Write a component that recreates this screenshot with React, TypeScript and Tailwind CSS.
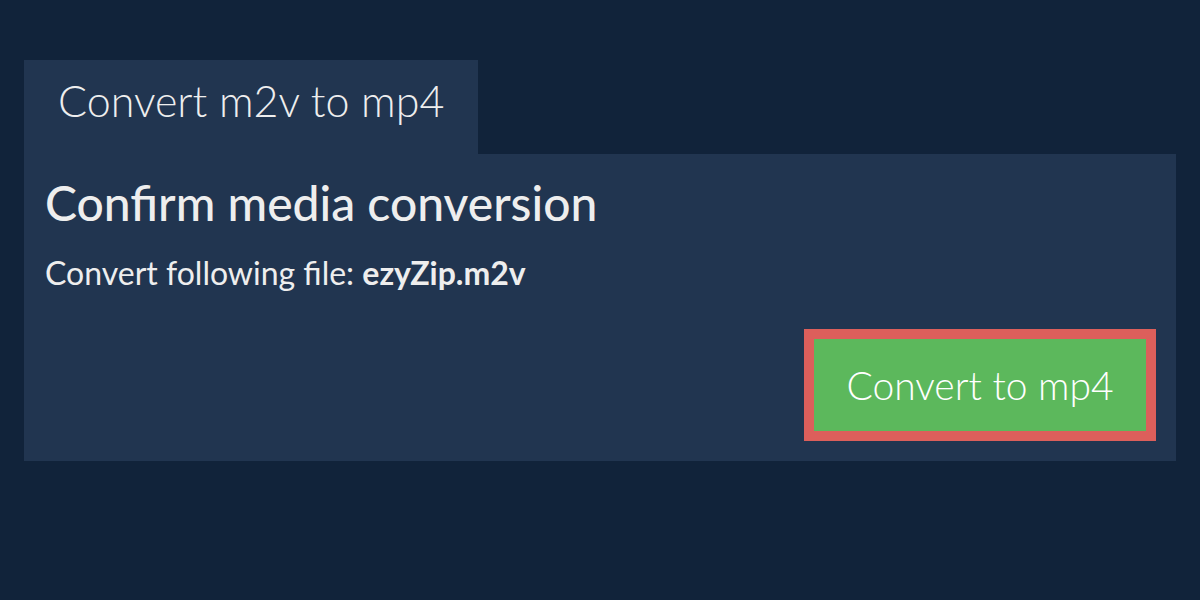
import React from 'react';

export default function App() {
  return (
    <main
      className="min-h-screen w-full bg-[#11233a] px-6 pt-[60px] text-[#eeeeee]"
      style={{ fontFamily: 'Lato, "Noto Sans", sans-serif' }}
    >
      {/* Tab */}
      <div className="h-[94px] w-[454px] bg-[#213550] pl-[34px] pt-[19px]">
        <span className="text-[43px] font-light leading-[43px]">Convert m2v to mp4</span>
      </div>

      {/* Panel */}
      <div className="flex h-[307px] flex-col bg-[#213550] pl-[21px] pr-5 pt-[20px]">
        <h1 className="text-[48px] font-medium leading-[58px]">Confirm media conversion</h1>
        <p className="mt-[22px] text-[32px] leading-[38px]">
          Convert following file: <b className="font-bold">ezyZip.m2v</b>
        </p>
        <div className="mt-auto mb-5 flex justify-end">
          <button className="h-[112px] w-[352px] border-[10px] border-[#dc5f5b] bg-[#5cb85c] text-[39px] font-light text-white">
            Convert to mp4
          </button>
        </div>
      </div>
    </main>
  );
}
